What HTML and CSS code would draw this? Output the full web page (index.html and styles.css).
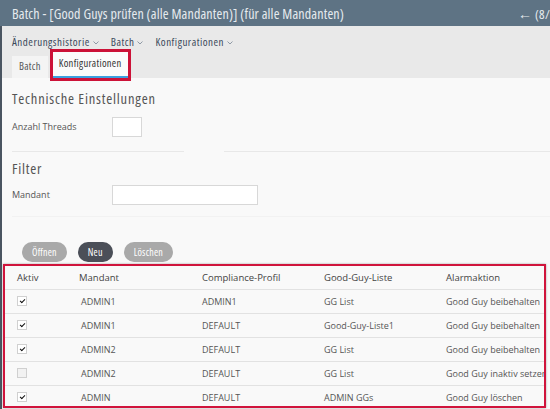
FILE: index.html
```html
<!DOCTYPE html>
<html lang="de">
<head>
<meta charset="utf-8">
<title>Batch</title>
<link rel="stylesheet" href="styles.css">
</head>
<body>
<div class="app">
  <header class="titlebar">
    <div class="title">Batch - [Good Guys prüfen (alle Mandanten)] (für alle Mandanten)</div>
    <div class="pager"><span class="arrow">&#8592;</span> (8/</div>
  </header>
  <div class="main">
    <nav class="nav">
      <ul class="menu">
        <li>Änderungshistorie<svg class="caret" viewBox="0 0 6 4" width="6" height="4"><path d="M0.5 0.5 L3 3 L5.5 0.5" fill="none" stroke="#8f9aa6" stroke-width="1"/></svg></li>
        <li>Batch<svg class="caret" viewBox="0 0 6 4" width="6" height="4"><path d="M0.5 0.5 L3 3 L5.5 0.5" fill="none" stroke="#8f9aa6" stroke-width="1"/></svg></li>
        <li>Konfigurationen<svg class="caret" viewBox="0 0 6 4" width="6" height="4"><path d="M0.5 0.5 L3 3 L5.5 0.5" fill="none" stroke="#8f9aa6" stroke-width="1"/></svg></li>
      </ul>
      <div class="tabs">
        <div class="tab">Batch</div>
        <div class="tab active">Konfigurationen</div>
      </div>
    </nav>
    <section class="content">
      <div class="section">
        <h2>Technische Einstellungen</h2>
        <div class="field">
          <label>Anzahl Threads</label>
          <span class="input small"></span>
        </div>
      </div>
      <div class="rules">
        <hr class="rule left">
        <hr class="rule right">
      </div>
      <div class="section filter">
        <h2>Filter</h2>
        <div class="field">
          <label>Mandant</label>
          <span class="input wide"></span>
        </div>
      </div>
      <div class="faint"></div>
      <div class="buttons">
        <button class="btn grey">Öffnen</button>
        <button class="btn dark">Neu</button>
        <button class="btn grey">Löschen</button>
      </div>
    </section>
    <div class="tablebox">
      <table class="grid">
        <colgroup>
          <col class="c1"><col class="c2"><col class="c3"><col class="c4"><col class="c5">
        </colgroup>
        <thead>
          <tr><th>Aktiv</th><th>Mandant</th><th>Compliance-Profil</th><th>Good-Guy-Liste</th><th>Alarmaktion</th></tr>
        </thead>
        <tbody>
          <tr><td><span class="cb on"></span></td><td class="m">ADMIN1</td><td>ADMIN1</td><td>GG List</td><td>Good Guy beibehalten</td></tr>
          <tr><td><span class="cb on"></span></td><td class="m">ADMIN1</td><td>DEFAULT</td><td>Good-Guy-Liste1</td><td>Good Guy beibehalten</td></tr>
          <tr><td><span class="cb on"></span></td><td class="m">ADMIN2</td><td>DEFAULT</td><td>GG List</td><td>Good Guy beibehalten</td></tr>
          <tr><td><span class="cb"></span></td><td class="m">ADMIN2</td><td>DEFAULT</td><td>GG List</td><td>Good Guy inaktiv setzen</td></tr>
          <tr><td><span class="cb on"></span></td><td class="m">ADMIN</td><td>DEFAULT</td><td>ADMIN GGs</td><td>Good Guy löschen</td></tr>
        </tbody>
      </table>
    </div>
  </div>
</div>
</body>
</html>
```
FILE: styles.css
```css
html, body {
  margin: 0;
  padding: 0;
  height: 100%;
  overflow: hidden;
  background: #f9f9f9;
  font-family: "Open Sans", "Noto Sans", sans-serif;
  color: #555;
}
.app {
  width: 550px;
  height: 409px;
  overflow: hidden;
}
.titlebar {
  height: 26px;
  background: #5e7384;
  color: #e6ebef;
  display: flex;
  align-items: center;
  font-size: 14px;
  white-space: nowrap;
}
.title {
  flex: 1;
  padding-left: 12px;
  font-stretch: 75%;
  letter-spacing: 0.15px;
}
.pager {
  flex: 0 0 auto;
  font-size: 13px;
  font-stretch: 75%;
  letter-spacing: 0.3px;
}
.arrow {
  font-size: 14px;
}
.main {
  border-left: 2px solid #4a5561;
  height: 383px;
}
.nav {
  background: #e9e9e9;
  height: 52px;
  padding-left: 10px;
}
.menu {
  list-style: none;
  margin: 0;
  padding: 4px 0 0 0;
  display: flex;
  gap: 12px;
  height: 22px;
  align-items: center;
  font-size: 11px;
  font-stretch: 75%;
  letter-spacing: 0.5px;
  color: #3b4a5c;
}
.menu li {
  display: flex;
  align-items: center;
}
.caret {
  margin-left: 3px;
  margin-top: 3px;
}
.tabs {
  display: flex;
  align-items: flex-end;
  gap: 5px;
  height: 26px;
}
.tab {
  height: 22px;
  line-height: 21px;
  padding: 0 7px;
  font-size: 10.5px;
  font-stretch: 75%;
  letter-spacing: 0.3px;
  color: #555;
  background: #f4f4f4;
}
.tab.active {
  background: #fbfbfb;
  color: #333;
  box-sizing: border-box;
  height: 26px;
  line-height: 22px;
  border-bottom: 2px solid #3aa0e0;
  outline: 3px solid #cc1238;
  outline-offset: 0;
  padding: 0 6px;
}
.content {
  padding: 0 0 0 10px;
}
h2 {
  margin: 0;
  font-weight: normal;
  font-size: 14.5px;
  font-stretch: 75%;
  letter-spacing: 0.8px;
  color: #555;
}
.section h2 {
  padding-top: 11px;
  height: 22px;
}
.section.filter h2 {
  padding-top: 6px;
}
.field {
  display: flex;
  align-items: center;
  margin-top: 5px;
  height: 21px;
  font-size: 9px;
}
.filter .field {
  margin-top: 3px;
}
.field label {
  width: 100px;
}
.input {
  display: block;
  height: 18px;
  background: #fff;
  border: 1px solid #d8d8d8;
}
.input.small { width: 28px; }
.input.wide { width: 144px; }
.rules {
  display: flex;
  margin-top: 14px;
  height: 2px;
}
.rule {
  margin: 0;
  border: 0;
  border-top: 1px solid #e8e8e8;
}
.rule.left { width: 172px; }
.rule.right { margin-left: 40px; flex: 1; }
.faint {
  margin-top: 11px;
  height: 1px;
  background: #f2f2f2;
}
.buttons {
  display: flex;
  gap: 11px;
  padding-left: 10px;
  margin-top: 25px;
}
.btn {
  height: 20px;
  border: 0;
  border-radius: 10px;
  padding: 0 10px;
  font-family: "Open Sans", "Noto Sans", sans-serif;
  font-stretch: 75%;
  letter-spacing: 0.2px;
  font-size: 10px;
  color: #fff;
}
.btn.grey { background: #a9a9a9; }
.btn.dark { background: #4b4f58; }
.tablebox {
  margin: 2px 4px 0 1px;
  border: 2px solid #d0143c;
  box-shadow: 0 0 2px rgba(0,0,0,0.35);
  height: 140px;
  overflow: hidden;
}
.grid {
  width: 100%;
  table-layout: fixed;
  border-collapse: collapse;
  font-size: 9px;
  color: #444;
}
.grid col.c1 { width: 74px; }
.grid col.c2 { width: 123px; }
.grid col.c3 { width: 122px; }
.grid col.c4 { width: 122px; }
.grid th {
  text-align: left;
  font-weight: normal;
  font-size: 9.5px;
  height: 23px;
  padding: 0;
  box-sizing: border-box;
  border-bottom: 1px solid #e2e2e2;
}
.grid td {
  height: 23px;
  padding: 0;
  border-bottom: 1px solid #e2e2e2;
  color: #555;
  white-space: nowrap;
}
.grid tr:last-child td { border-bottom: 0; }
.grid th:first-child, .grid td:first-child { padding-left: 12px; }
.grid td.m { padding-left: 2px; }
.cb {
  display: block;
  width: 10px;
  height: 10px;
  border: 1px solid #d0d0d0;
  background: #f2f2f2;
  box-sizing: border-box;
  position: relative;
}
.cb.on { background: #fff; }
.cb.on::after {
  content: "";
  position: absolute;
  top: 2px;
  left: 2px;
  width: 4px;
  height: 2px;
  border-left: 1.5px solid #111;
  border-bottom: 1.5px solid #111;
  transform: rotate(-45deg);
}
```
